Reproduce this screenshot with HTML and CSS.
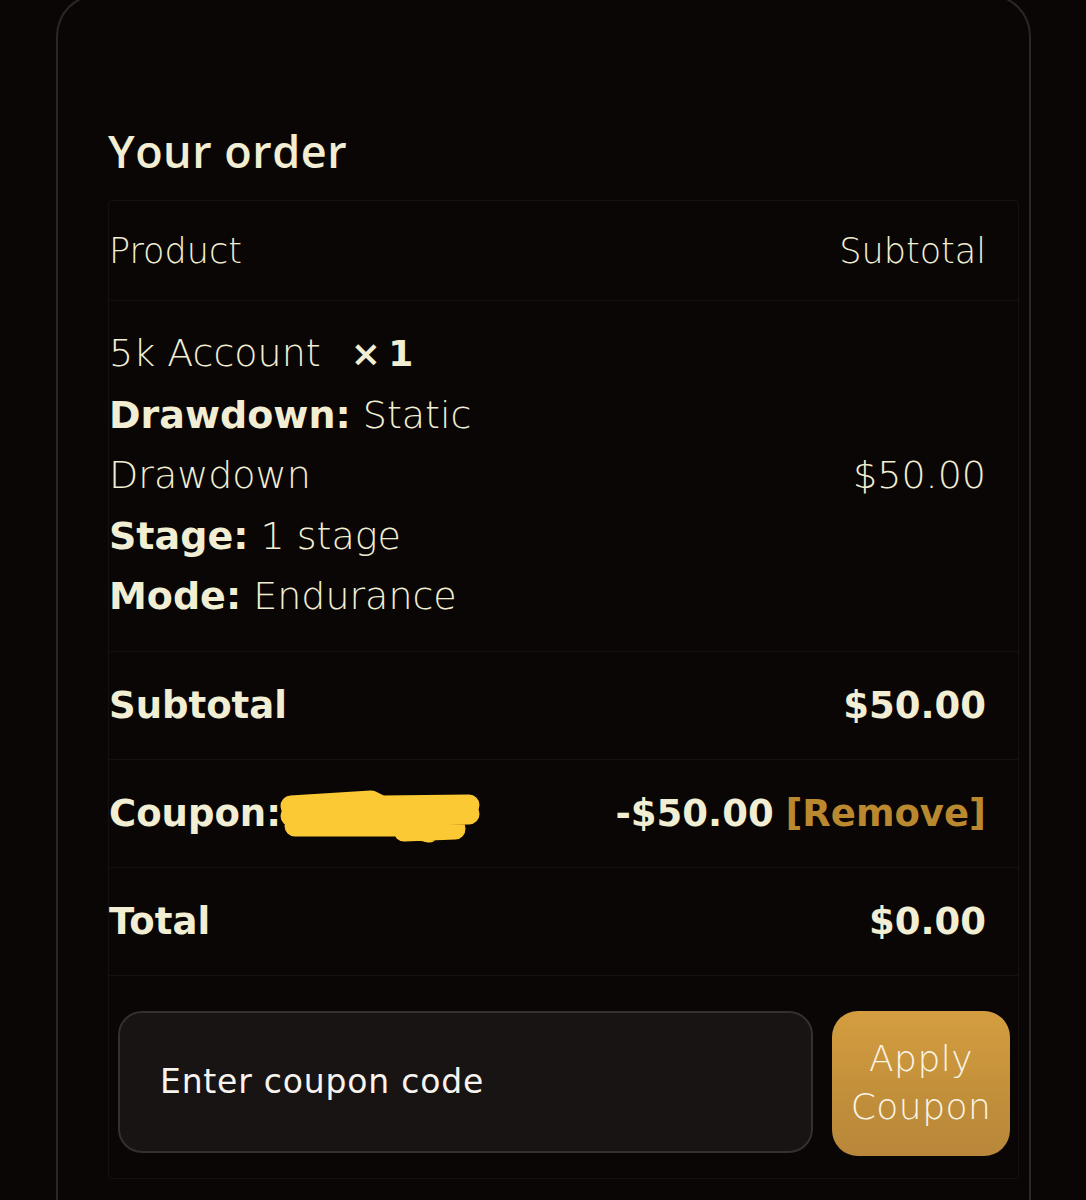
FILE: index.html
```html
<!DOCTYPE html>
<html lang="en">
<head>
<meta charset="utf-8">
<title>Your order</title>
<link rel="stylesheet" href="styles.css">
</head>
<body>
<div class="card">
  <h2 class="title">Your order</h2>
  <div class="table">
    <div class="row head">
      <span class="light">Product</span>
      <span class="light">Subtotal</span>
    </div>
    <div class="row product">
      <div class="desc">
        <div>5k Account <b class="qty">×&#8201;1</b></div>
        <div><b>Drawdown:</b> Static</div>
        <div>Drawdown</div>
        <div><b>Stage:</b> 1 stage</div>
        <div><b>Mode:</b> Endurance</div>
      </div>
      <span class="price">$50.00</span>
    </div>
    <div class="row sum">
      <b>Subtotal</b>
      <b>$50.00</b>
    </div>
    <div class="row sum">
      <span class="coupon"><b>Coupon:</b><svg class="redact" width="204" height="66" viewBox="0 0 204 66"><path d="M12 22 L92 17 L102 22 L190 21 M12 32 L190 30 M16 42 L125 42 L150 48 M125 47 L176 45" stroke="#fbc934" stroke-width="21" stroke-linecap="round" stroke-linejoin="round" fill="none"/></svg></span>
      <span><b>-$50.00</b> <b class="remove">[Remove]</b></span>
    </div>
    <div class="row sum">
      <b>Total</b>
      <b>$0.00</b>
    </div>
    <div class="form">
      <div class="input">Enter coupon code</div>
      <div class="btn">Apply<br>Coupon</div>
    </div>
  </div>
</div>
</body>
</html>
```
FILE: styles.css
```css
html, body {
  margin: 0;
  background: #0a0606;
}
body {
  font-family: "DejaVu Sans", "Open Sans", sans-serif;
  color: #f1eed3;
  overflow: hidden;
  height: 1200px;
}
.card {
  box-sizing: border-box;
  margin: -6px 55px 0 56px;
  border: 2px solid #2b2727;
  border-bottom: none;
  border-radius: 42px 42px 0 0;
  background: #0a0606;
  padding: 125px 10px 0 50px;
  height: 1206px;
}
.title {
  margin: 0 0 19px;
  font-family: "Open Sans", sans-serif;
  font-size: 45px;
  font-weight: 600;
  line-height: 60px;
  letter-spacing: 0.5px;
}
.table {
  border: 1px solid #161010;
  border-radius: 4px;
}
.row {
  display: flex;
  justify-content: space-between;
  align-items: center;
  padding: 0 32px 0 0;
  border-bottom: 1px solid #161010;
}
.head {
  height: 99px;
  font-size: 35px;
}
.light { font-weight: 300; }
.product {
  padding-top: 22px;
  padding-bottom: 24px;
  font-size: 38px;
  font-weight: 300;
  line-height: 60.5px;
}
.product b { font-weight: 700; }
.qty { margin-left: 18px; font-size: 36px; }
.price { font-weight: 300; }
.sum {
  height: 107px;
  font-size: 37px;
}
.sum b { font-weight: 700; }
.coupon {
  display: flex;
  align-items: center;
}
.redact {
  margin-left: -2px;
  margin-top: 8px;
}
.remove { color: #b9882f; }
.form {
  display: flex;
  gap: 19px;
  padding: 35px 8px 22px 9px;
}
.input {
  flex: 1;
  height: 142px;
  box-sizing: border-box;
  border: 2px solid #353030;
  border-radius: 24px;
  background: #191414;
  display: flex;
  align-items: center;
  padding-left: 40px;
  font-size: 33px;
  letter-spacing: 0.8px;
  color: #f7f3ee;
}
.btn {
  width: 178px;
  height: 145px;
  border-radius: 26px;
  background: linear-gradient(180deg, #d49d40 0%, #c18f3a 60%, #b8873a 100%);
  display: flex;
  align-items: center;
  justify-content: center;
  text-align: center;
  font-size: 36px;
  font-weight: 300;
  line-height: 48px;
  color: #fbf5e6;
  letter-spacing: 0.5px;
}
```
